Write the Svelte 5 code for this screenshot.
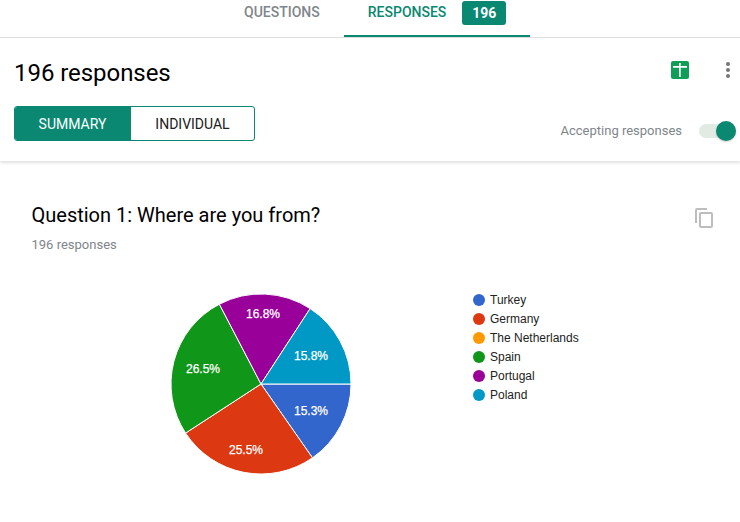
<script lang="ts">
  // lx, ly: label position from the centre of the pie
  const slices = [
    { name: "Turkey", color: "#3366cc", pct: 15.3, value: 15.31, lx: 50, ly: 27 },
    { name: "Germany", color: "#dc3912", pct: 25.5, value: 25.51, lx: -15, ly: 66 },
    { name: "The Netherlands", color: "#ff9900", pct: 0, value: 0, lx: 0, ly: 0 },
    { name: "Spain", color: "#109618", pct: 26.5, value: 26.53, lx: -58, ly: -15 },
    { name: "Portugal", color: "#990099", pct: 16.8, value: 16.84, lx: 2, ly: -70 },
    { name: "Poland", color: "#0099c6", pct: 15.8, value: 15.81, lx: 50, ly: -28 },
  ];

  const cx = 91;
  const cy = 91;
  const r = 90;

  function point(turn: number, radius: number) {
    const a = turn * 2 * Math.PI;
    return [cx + radius * Math.cos(a), cy + radius * Math.sin(a)];
  }

  // starts at 3 o'clock, goes clockwise
  let acc = 0;
  const wedges = slices
    .filter((s) => s.value > 0)
    .map((s) => {
      const from = acc / 100;
      acc += s.value;
      const to = acc / 100;
      const [x1, y1] = point(from, r);
      const [x2, y2] = point(to, r);
      const large = to - from > 0.5 ? 1 : 0;
      return {
        ...s,
        d: `M${cx} ${cy}L${x1} ${y1}A${r} ${r} 0 ${large} 1 ${x2} ${y2}Z`,
      };
    });
</script>

<div class="page">
  <nav class="tabs">
    <div class="tab">QUESTIONS</div>
    <div class="tab active">
      RESPONSES
      <span class="count">196</span>
    </div>
  </nav>

  <header class="head">
    <div class="head-left">
      <h1>196 responses</h1>
      <div class="segment">
        <div class="seg on">SUMMARY</div>
        <div class="seg">INDIVIDUAL</div>
      </div>
    </div>
    <div class="head-right">
      <div class="actions">
        <svg class="sheets" width="18" height="18" viewBox="0 0 18 18">
          <rect width="18" height="18" rx="2" fill="#0f9d58" />
          <path d="M8 2h1.7v3H16v1.7H9.700V16H8V6.700H2V5h6z" fill="#fff" />
        </svg>
        <svg class="more" width="4" height="16" viewBox="0 0 4 16">
          <circle cx="2" cy="2" r="2" fill="#757575" />
          <circle cx="2" cy="8" r="2" fill="#757575" />
          <circle cx="2" cy="14" r="2" fill="#757575" />
        </svg>
      </div>
      <div class="accepting">
        <span>Accepting responses</span>
        <div class="toggle"><div class="thumb"></div></div>
      </div>
    </div>
  </header>

  <section class="card">
    <div class="card-top">
      <div>
        <h2>Question 1: Where are you from?</h2>
        <div class="sub">196 responses</div>
      </div>
      <svg class="copy" width="18" height="20" viewBox="0 0 18 20">
        <path d="M1 15V2.200C1 1.500 1.500 1 2.200 1H12" fill="none" stroke="#bdbdbd" stroke-width="2" />
        <rect x="5" y="5" width="12" height="14" rx="1" fill="none" stroke="#bdbdbd" stroke-width="2" />
      </svg>
    </div>

    <div class="chart">
      <svg class="pie" width="182" height="182" viewBox="0 0 182 182">
        {#each wedges as w}
          <path d={w.d} fill={w.color} stroke="#fff" stroke-width="1" />
        {/each}
        {#each wedges as w}
          <text x={cx + w.lx} y={cy + w.ly + 4} text-anchor="middle">{w.pct.toFixed(1)}%</text>
        {/each}
      </svg>
      <ul class="legend">
        {#each slices as s}
          <li><i style="background: {s.color}"></i>{s.name}</li>
        {/each}
      </ul>
    </div>
  </section>
</div>

<style>
  :global(body) {
    margin: 0;
    background: #fff;
  }
  .page {
    width: 740px;
    height: 522px;
    overflow: hidden;
    font-family: Roboto, "Liberation Sans", sans-serif;
    position: relative;
  }
  .tabs {
    display: flex;
    height: 37px;
    border-bottom: 1px solid #e0e0e0;
    padding-left: 220px;
    box-sizing: content-box;
  }
  .tab {
    display: flex;
    align-items: flex-start;
    gap: 16px;
    height: 35px;
    padding: 5px 24px 0;
    box-sizing: border-box;
    font-size: 14px;
    font-weight: 500;
    line-height: 15px;
    color: #80868b;
  }
  .tab.active {
    color: #0a8872;
    height: 37px;
    margin-left: 0;
    border-bottom: 2px solid #0a8872;
  }
  .count {
    margin-top: -4px;
    width: 44px;
    height: 24px;
    line-height: 24px;
    text-align: center;
    background: #0a8872;
    color: #fff;
    border-radius: 3px;
    font-weight: 700;
  }
  .head {
    display: flex;
    justify-content: space-between;
    height: 123px;
    padding: 0 4px 0 14px;
    box-sizing: border-box;
    box-shadow: 0 2px 3px rgba(0, 0, 0, 0.12);
    position: relative;
  }
  h1 {
    margin: 20px 0 0;
    font-size: 24px;
    font-weight: 400;
    line-height: 30px;
    letter-spacing: -0.05px;
    color: #000;
  }
  .segment {
    display: flex;
    margin-top: 18px;
    width: 241px;
    height: 35px;
    box-sizing: border-box;
    border: 1px solid #0a8872;
    border-radius: 3px;
    overflow: hidden;
  }
  .seg {
    flex: 1;
    display: flex;
    align-items: center;
    justify-content: center;
    font-size: 14px;
    color: #212121;
  }
  .seg.on {
    flex: none;
    width: 116px;
    padding-right: 1px;
    box-sizing: border-box;
    background: #0a8872;
    color: #fff;
  }
  .head-right {
    display: flex;
    flex-direction: column;
    align-items: flex-end;
  }
  .actions {
    display: flex;
    align-items: center;
    gap: 37px;
    margin-top: 23px;
    margin-right: 6px;
  }
  .accepting {
    display: flex;
    align-items: center;
    gap: 17px;
    margin-top: 44px;
    font-size: 13px;
    color: #80868b;
  }
  .toggle {
    width: 37px;
    height: 14px;
    border-radius: 7px;
    background: #e2ebe3;
    position: relative;
  }
  .thumb {
    position: absolute;
    right: 0;
    top: -3px;
    width: 20px;
    height: 20px;
    border-radius: 50%;
    background: #0a8872;
    box-shadow: 0 1px 2px rgba(0, 0, 0, 0.2);
  }
  .card {
    padding: 0 27px 0 31.500px;
  }
  .card-top {
    display: flex;
    justify-content: space-between;
    align-items: flex-start;
    padding-top: 41px;
  }
  h2 {
    margin: 0;
    font-size: 20px;
    font-weight: 400;
    line-height: 26px;
    color: #000;
  }
  .sub {
    margin-top: 9px;
    font-size: 13px;
    line-height: 16px;
    color: #80868b;
  }
  .copy {
    margin-top: 6px;
  }
  .chart {
    display: flex;
    align-items: flex-start;
    margin-top: 30px;
    padding-left: 138.500px;
  }
  .pie {
    margin-top: 10px;
  }
  .pie text {
    font-family: "Liberation Sans", Arial, sans-serif;
    font-size: 12px;
    fill: #fff;
    stroke: #fff;
    stroke-width: 0.25px;
  }
  .legend {
    list-style: none;
    margin: 7px 0 0 121px;
    padding: 0;
    font-family: "Liberation Sans", Arial, sans-serif;
    font-size: 12px;
    color: #222;
  }
  .legend li {
    display: flex;
    align-items: center;
    gap: 5px;
    height: 19px;
  }
  .legend i {
    width: 12px;
    height: 12px;
    border-radius: 50%;
  }
</style>
